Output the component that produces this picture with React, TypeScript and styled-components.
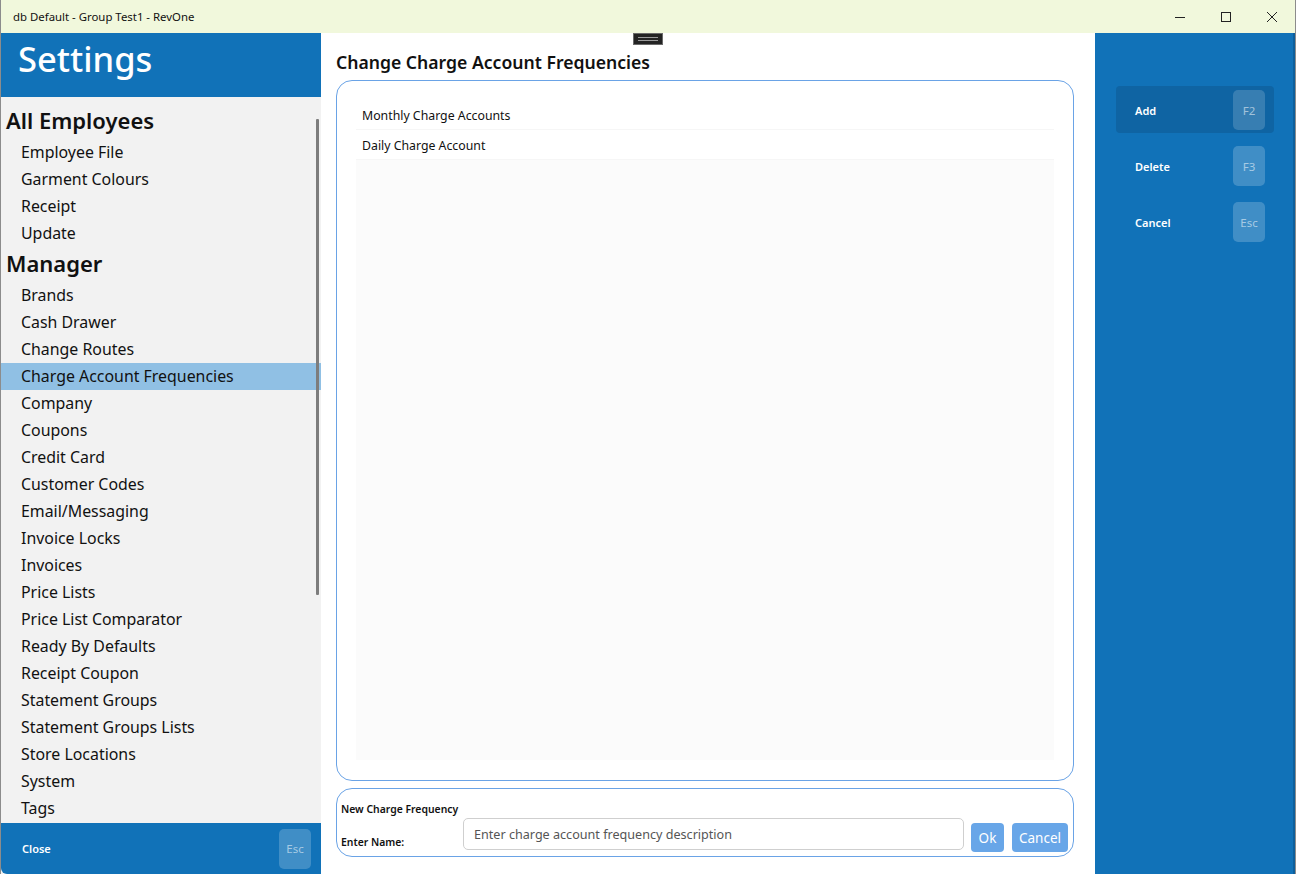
import React from "react";
import styled, { createGlobalStyle } from "styled-components";

const Global = createGlobalStyle`
  html, body { margin: 0; padding: 0; background: #ffffff; }
  body { font-family: "Noto Sans", "Open Sans", sans-serif; }
  * { box-sizing: border-box; }
`;

const BLUE = "#1172b8";

const Window = styled.div`
  width: 1296px;
  height: 874px;
  display: flex;
  flex-direction: column;
  overflow: hidden;
  border-left: 1px solid #8c8c8c;
  border-right: 1px solid #8c8c8c;
`;

const TitleBar = styled.div`
  height: 33px;
  flex: none;
  display: flex;
  align-items: center;
  background: #f1f8dc;
  padding-left: 12px;
`;

const TitleText = styled.div`
  font-family: "Noto Sans", sans-serif;
  font-size: 11.4px;
  color: #111;
  flex: 1;
`;

const WinButton = styled.div`
  width: 46px;
  height: 33px;
  display: flex;
  align-items: center;
  justify-content: center;
  color: #222;
`;

const Body = styled.div`
  flex: 1;
  display: flex;
  min-height: 0;
`;

const Sidebar = styled.aside`
  width: 320px;
  flex: none;
  display: flex;
  flex-direction: column;
  background: #f2f2f2;
  position: relative;
`;

const SideHeader = styled.div`
  height: 64px;
  flex: none;
  background: ${BLUE};
  color: #fff;
  font-size: 34.5px;
  font-weight: 500;
  padding-left: 17px;
  display: flex;
  align-items: center;
  padding-bottom: 13px;
`;

const SideList = styled.div`
  flex: 1;
  overflow: hidden;
  padding-top: 7px;
`;

const GroupTitle = styled.div`
  height: 34px;
  line-height: 33px;
  padding-left: 5px;
  font-size: 22px;
  font-weight: 600;
  color: #111;
  & + div { margin-top: 1px; }
`;

const NavItem = styled.div<{ $active?: boolean }>`
  height: 27px;
  line-height: 27px;
  font-size: 15.9px;
  color: #111;
  padding-left: 20px;
  background: ${(p) => (p.$active ? "#90c0e4" : "transparent")};
  white-space: nowrap;
`;

const ScrollThumb = styled.div`
  position: absolute;
  right: 2px;
  top: 86px;
  width: 3px;
  height: 476px;
  background: #7d7d7d;
  border-radius: 1px;
`;

const SideFooter = styled.div`
  height: 51px;
  flex: none;
  background: ${BLUE};
  display: flex;
  align-items: center;
  justify-content: space-between;
  padding: 0 10px 0 21px;
  border-bottom-left-radius: 6px;
`;

const ActionLabel = styled.span`
  color: #fff;
  font-size: 11px;
  font-weight: 600;
`;

const KeyCap = styled.span<{ $dim?: boolean }>`
  width: 32px;
  height: 40px;
  border-radius: 5px;
  display: flex;
  align-items: center;
  justify-content: center;
  font-size: 11.5px;
  color: rgba(255, 255, 255, 0.55);
  background: ${(p) => (p.$dim ? "rgba(255,255,255,0.17)" : "rgba(255,255,255,0.2)")};
`;

const Main = styled.main`
  flex: 1;
  display: flex;
  flex-direction: column;
  padding: 12px 21px 17px 15px;
  position: relative;
  background: #fff;
`;

const Handle = styled.div`
  position: absolute;
  left: 312px;
  top: 0;
  width: 30px;
  height: 12px;
  background: #232323;
  border: 1px solid #6a6a6a;
  display: flex;
  flex-direction: column;
  justify-content: center;
  align-items: center;
  gap: 2px;
`;

const HandleLine = styled.span`
  width: 20px;
  height: 1px;
  background: #9a9a9a;
`;

const PageTitle = styled.h1`
  margin: 0;
  height: 35px;
  line-height: 34px;
  font-size: 17.6px;
  font-weight: 600;
  color: #111;
`;

const ListBox = styled.div`
  flex: 1;
  border: 1px solid #6aa3e6;
  border-radius: 16px;
  padding: 19px 19px 20px 19px;
  display: flex;
  margin-bottom: 7px;
`;

const ListInner = styled.div`
  flex: 1;
  background: #fbfbfb;
`;

const ListRow = styled.div`
  height: 30px;
  line-height: 31px;
  padding-left: 6px;
  font-size: 12.3px;
  color: #111;
  background: #fff;
  border-bottom: 1px solid #f6f6f6;
`;

const FormBox = styled.div`
  height: 69px;
  flex: none;
  border: 1px solid #6aa3e6;
  border-radius: 16px;
  display: flex;
  align-items: flex-end;
  padding: 0 5px 0 4px;
`;

const LabelCol = styled.div`
  width: 122px;
  flex: none;
  align-self: stretch;
  display: flex;
  flex-direction: column;
  justify-content: space-between;
  padding: 12px 0 6px;
`;

const SmallLabel = styled.div`
  font-size: 10.4px;
  font-weight: 600;
  color: #111;
  line-height: 16px;
  white-space: nowrap;
`;

const TextInput = styled.input`
  flex: 1;
  min-width: 0;
  height: 32px;
  margin-bottom: 6px;
  border: 1px solid #cfcfcf;
  border-radius: 5px;
  padding: 0 10px;
  font-family: "Noto Sans", sans-serif;
  font-size: 12.6px;
  color: #333;
  outline: none;
  &::placeholder { color: #555; }
`;

const FormButton = styled.button<{ $w: number; $gap: number }>`
  width: ${(p) => p.$w}px;
  flex: none;
  height: 29px;
  margin: 0 0 4px ${(p) => p.$gap}px;
  border: none;
  border-radius: 4px;
  background: #68a6e8;
  color: #fff;
  font-family: "Noto Sans", sans-serif;
  font-size: 13.5px;
  padding: 0;
`;

const RightPanel = styled.aside`
  width: 200px;
  flex: none;
  background: ${BLUE};
  padding: 53px 19px 0 21px;
  display: flex;
  flex-direction: column;
  gap: 9px;
  border-right: 2px solid #0d5f9c;
`;

const ActionRow = styled.div<{ $hover?: boolean }>`
  height: 47px;
  border-radius: 4px;
  display: flex;
  align-items: center;
  justify-content: space-between;
  padding: 1px 9px 0 19px;
  background: ${(p) => (p.$hover ? "#0f64a3" : "transparent")};
`;

const sections: { title: string; items: string[] }[] = [
  { title: "All Employees", items: ["Employee File", "Garment Colours", "Receipt", "Update"] },
  {
    title: "Manager",
    items: [
      "Brands",
      "Cash Drawer",
      "Change Routes",
      "Charge Account Frequencies",
      "Company",
      "Coupons",
      "Credit Card",
      "Customer Codes",
      "Email/Messaging",
      "Invoice Locks",
      "Invoices",
      "Price Lists",
      "Price List Comparator",
      "Ready By Defaults",
      "Receipt Coupon",
      "Statement Groups",
      "Statement Groups Lists",
      "Store Locations",
      "System",
      "Tags",
    ],
  },
];

const actions = [
  { label: "Add", key: "F2", hover: true },
  { label: "Delete", key: "F3" },
  { label: "Cancel", key: "Esc" },
];

export default function App() {
  return (
    <>
      <Global />
      <Window>
        <TitleBar>
          <TitleText>db Default - Group Test1 - RevOne</TitleText>
          <WinButton>
            <svg width="12" height="12" viewBox="0 0 12 12">
              <path d="M1 6.5h10" stroke="#222" strokeWidth="1" />
            </svg>
          </WinButton>
          <WinButton>
            <svg width="12" height="12" viewBox="0 0 12 12">
              <rect x="1.5" y="1.5" width="9" height="9" fill="none" stroke="#222" strokeWidth="1" />
            </svg>
          </WinButton>
          <WinButton>
            <svg width="12" height="12" viewBox="0 0 12 12">
              <path d="M1 1l10 10M11 1L1 11" stroke="#222" strokeWidth="1" />
            </svg>
          </WinButton>
        </TitleBar>
        <Body>
          <Sidebar>
            <SideHeader>Settings</SideHeader>
            <SideList>
              {sections.map((s) => (
                <React.Fragment key={s.title}>
                  <GroupTitle>{s.title}</GroupTitle>
                  {s.items.map((it) => (
                    <NavItem key={it} $active={it === "Charge Account Frequencies"}>
                      {it}
                    </NavItem>
                  ))}
                </React.Fragment>
              ))}
            </SideList>
            <ScrollThumb />
            <SideFooter>
              <ActionLabel>Close</ActionLabel>
              <KeyCap>Esc</KeyCap>
            </SideFooter>
          </Sidebar>
          <Main>
            <Handle>
              <HandleLine />
              <HandleLine />
            </Handle>
            <PageTitle>Change Charge Account Frequencies</PageTitle>
            <ListBox>
              <ListInner>
                <ListRow>Monthly Charge Accounts</ListRow>
                <ListRow>Daily Charge Account</ListRow>
              </ListInner>
            </ListBox>
            <FormBox>
              <LabelCol>
                <SmallLabel>New Charge Frequency</SmallLabel>
                <SmallLabel>Enter Name:</SmallLabel>
              </LabelCol>
              <TextInput placeholder="Enter charge account frequency description" />
              <FormButton $w={33} $gap={7}>Ok</FormButton>
              <FormButton $w={56} $gap={8}>Cancel</FormButton>
            </FormBox>
          </Main>
          <RightPanel>
            {actions.map((a) => (
              <ActionRow key={a.label} $hover={a.hover}>
                <ActionLabel>{a.label}</ActionLabel>
                <KeyCap $dim={a.hover}>{a.key}</KeyCap>
              </ActionRow>
            ))}
          </RightPanel>
        </Body>
      </Window>
    </>
  );
}
